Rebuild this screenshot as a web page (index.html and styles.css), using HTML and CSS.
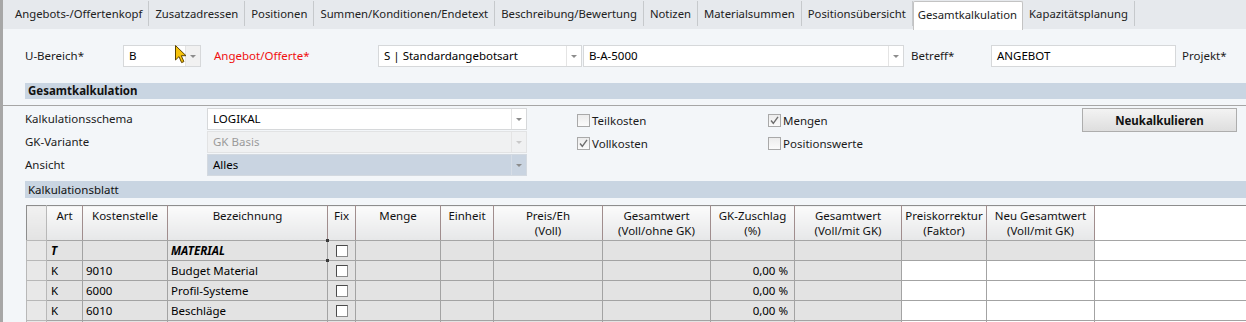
FILE: index.html
```html
<!DOCTYPE html>
<html lang="de">
<head>
    <meta charset="UTF-8">
    <title>Gesamtkalkulation</title>
    <link rel="stylesheet" href="styles.css">
</head>
<body>
<div class="window">
    <div class="tabs">
        <span class="tab">Angebots-/Offertenkopf</span>
        <span class="tab">Zusatzadressen</span>
        <span class="tab">Positionen</span>
        <span class="tab">Summen/Konditionen/Endetext</span>
        <span class="tab">Beschreibung/Bewertung</span>
        <span class="tab">Notizen</span>
        <span class="tab">Materialsummen</span>
        <span class="tab">Positionsübersicht</span>
        <span class="tab active">Gesamtkalkulation</span>
        <span class="tab">Kapazitätsplanung</span>
    </div>

    <div class="head">
        <span class="lbl lbl-ub">U-Bereich*</span>
        <div class="combo combo-ub"><span class="combo-text">B</span><span class="combo-btn grey"></span></div>
        <span class="lbl lbl-ang required">Angebot/Offerte*</span>
        <div class="combo combo-art"><span class="combo-text">S | Standardangebotsart</span><span class="combo-btn"></span></div>
        <div class="combo combo-nr"><span class="combo-text">B-A-5000</span><span class="combo-btn"></span></div>
        <span class="lbl lbl-betreff">Betreff*</span>
        <div class="field field-betreff">ANGEBOT</div>
        <span class="lbl lbl-projekt">Projekt*</span>
    </div>

    <div class="section-bar bold">Gesamtkalkulation</div>
    <div class="rule"></div>

    <div class="calc">
        <span class="lbl">Kalkulationsschema</span>
        <div class="combo"><span class="combo-text">LOGIKAL</span><span class="combo-btn"></span></div>
        <label class="check col-a"><span class="box"></span>Teilkosten</label>
        <label class="check col-b"><span class="box"><svg viewBox="0 0 11 11" width="11" height="11"><path d="M2 5.5 L4.3 8.3 L9 1.8" fill="none" stroke="#6e6e6e" stroke-width="1.4"/></svg></span>Mengen</label>
        <button class="btn">Neukalkulieren</button>

        <span class="lbl">GK-Variante</span>
        <div class="combo disabled"><span class="combo-text">GK Basis</span><span class="combo-btn"></span></div>
        <label class="check col-a"><span class="box"><svg viewBox="0 0 11 11" width="11" height="11"><path d="M2 5.5 L4.3 8.3 L9 1.8" fill="none" stroke="#6e6e6e" stroke-width="1.4"/></svg></span>Vollkosten</label>
        <label class="check col-b"><span class="box"></span>Positionswerte</label>

        <span class="lbl">Ansicht</span>
        <div class="combo selected"><span class="combo-text">Alles</span><span class="combo-btn"></span></div>
    </div>

    <div class="section-bar tall">Kalkulationsblatt</div>

    <table class="sheet">
        <colgroup>
            <col class="w-sel"><col class="w-art"><col class="w-kst"><col class="w-bez"><col class="w-fix">
            <col class="w-menge"><col class="w-einheit"><col class="w-preis"><col class="w-gesamt">
            <col class="w-gk"><col class="w-gesamt2"><col class="w-korr"><col class="w-neu"><col>
        </colgroup>
        <thead>
            <tr>
                <th class="rh"></th>
                <th>Art</th>
                <th>Kostenstelle</th>
                <th>Bezeichnung</th>
                <th>Fix</th>
                <th>Menge</th>
                <th>Einheit</th>
                <th>Preis/Eh<br>(Voll)</th>
                <th>Gesamtwert<br>(Voll/ohne GK)</th>
                <th>GK-Zuschlag<br>(%)</th>
                <th>Gesamtwert<br>(Voll/mit GK)</th>
                <th>Preiskorrektur<br>(Faktor)</th>
                <th>Neu Gesamtwert<br>(Voll/mit GK)</th>
                <th class="blank"></th>
            </tr>
        </thead>
        <tbody>
            <tr class="title">
                <td class="rh"></td>
                <td>T</td>
                <td></td>
                <td class="focus">MATERIAL</td>
                <td class="fix"><span class="cell-box"></span></td>
                <td></td><td></td><td></td><td></td><td></td><td></td>
                <td></td><td></td>
                <td class="edit"></td>
            </tr>
            <tr>
                <td class="rh"></td>
                <td>K</td>
                <td>9010</td>
                <td>Budget Material</td>
                <td class="fix"><span class="cell-box"></span></td>
                <td></td><td></td><td></td><td></td>
                <td class="num">0,00 %</td>
                <td></td>
                <td class="edit"></td><td class="edit"></td><td class="edit"></td>
            </tr>
            <tr>
                <td class="rh"></td>
                <td>K</td>
                <td>6000</td>
                <td>Profil-Systeme</td>
                <td class="fix"><span class="cell-box"></span></td>
                <td></td><td></td><td></td><td></td>
                <td class="num">0,00 %</td>
                <td></td>
                <td class="edit"></td><td class="edit"></td><td class="edit"></td>
            </tr>
            <tr>
                <td class="rh"></td>
                <td>K</td>
                <td>6010</td>
                <td>Beschläge</td>
                <td class="fix"><span class="cell-box"></span></td>
                <td></td><td></td><td></td><td></td>
                <td class="num">0,00 %</td>
                <td></td>
                <td class="edit"></td><td class="edit"></td><td class="edit"></td>
            </tr>
            <tr>
                <td class="rh"></td>
                <td></td><td></td><td></td><td class="fix"></td>
                <td></td><td></td><td></td><td></td><td></td><td></td>
                <td class="edit"></td><td class="edit"></td><td class="edit"></td>
            </tr>
        </tbody>
    </table>

    <!-- mouse pointer from the screenshot -->
    <svg class="cursor" viewBox="0 0 12 19" width="12" height="19">
        <path d="M0.5 0.5 L0.5 15 L4 11.6 L6.6 17.6 L8.9 16.6 L6.3 10.7 L11 10.7 Z" fill="#f6c20a" stroke="#5c4300" stroke-width="1"/>
    </svg>
</div>
</body>
</html>
```

FILE: styles.css
```css
body {
    margin: 0;
    background: #f3f6f9;
    color: #1b1b1b;
    font-family: "Noto Sans", "Open Sans", sans-serif;
    font-size: 11.5px;
}
.window {
    position: relative;
    height: 322px;
    overflow: hidden;
    border-left: 3px solid #a7a7a7;
    background: #f3f6f9;
}

/* tab strip */
.tabs {
    display: flex;
    height: 29px;
    padding-left: 6px;
    background: #e6e9ed;
    font-size: 11.3px;
}
.tab {
    height: 25px;
    margin-top: 1px;
    padding: 0 6px;
    border-right: 1px solid #c6c9cc;
    line-height: 25px;
    color: #222222;
    white-space: nowrap;
}
.tab.active {
    height: 28px;
    margin-top: 1px;
    padding: 0 5px 0 4px;
    border: 1px solid #c3c3c3;
    border-bottom: none;
    border-radius: 2px 2px 0 0;
    background: #ffffff;
    line-height: 25px;
}

/* header fields */
.head {
    display: flex;
    align-items: flex-start;
    height: 54px;
    padding: 16px 0 0 22px;
    box-sizing: border-box;
}
.lbl {
    line-height: 22px;
    white-space: nowrap;
}
.lbl-ub { width: 98px; }
.lbl-ang { width: 164px; margin-left: 13px; }
.lbl-betreff { width: 80px; margin-left: 7px; }
.lbl-projekt { margin-left: 6px; }
.required { color: #f01010; }

.combo {
    display: flex;
    height: 22px;
    box-sizing: border-box;
    border: 1px solid #d6d8da;
    background: #ffffff;
}
.combo-text {
    flex: 1;
    padding-left: 5px;
    line-height: 20px;
    color: #000000;
    white-space: nowrap;
    overflow: hidden;
}
.combo-btn {
    position: relative;
    width: 14px;
    border-left: 1px solid #e4e4e4;
}
.combo-btn.grey {
    background: #f1f1f1;
}
.combo-btn::after {
    content: "";
    position: absolute;
    left: 4px;
    top: 9px;
    border-left: 3px solid transparent;
    border-right: 3px solid transparent;
    border-top: 3px solid #8c8c8c;
}
.combo-ub { width: 78px; }
.combo-art { width: 204px; }
.combo-nr { width: 321px; margin-left: 1px; }
.combo.disabled {
    background: #f0f1f2;
    border-color: #e2e3e4;
}
.combo.disabled .combo-text { color: #9a9a9a; }
.combo.disabled .combo-btn::after { border-top-color: #c9c9c9; }
.combo.selected {
    background: #c9d4e1;
    border-color: #d3d9e0;
}
.combo.selected .combo-btn { border-left-color: #d6dde6; }

.field {
    width: 185px;
    height: 22px;
    box-sizing: border-box;
    padding-left: 5px;
    border: 1px solid #d6d8da;
    background: #ffffff;
    line-height: 20px;
    color: #000000;
}

/* section bars */
.section-bar {
    height: 16px;
    margin-left: 22px;
    padding-left: 3px;
    background: #c9d5e2;
    line-height: 16px;
    color: #111111;
}
.section-bar.bold { font-weight: bold; }
.section-bar.tall { height: 17px; line-height: 17px; }
.rule {
    height: 1px;
    margin-top: 6px;
    background: #a6a6a6;
}

/* calculation options */
.calc {
    display: grid;
    grid-template-columns: 182px 320px 50px 191px 314px 155px;
    grid-template-rows: 22px 22px 22px;
    row-gap: 1px;
    align-items: center;
    height: 75px;
    padding: 2px 0 0 22px;
    box-sizing: border-box;
}
.calc .lbl { grid-column: 1; }
.calc .combo { grid-column: 2; }
.check {
    display: flex;
    align-items: center;
    margin-top: 2px;
    white-space: nowrap;
}
.col-a { grid-column: 4; }
.col-b { grid-column: 5; }
.box {
    display: flex;
    align-items: center;
    justify-content: center;
    width: 13px;
    height: 13px;
    margin-right: 2px;
    box-sizing: border-box;
    border: 1px solid #a9a9a9;
    background: linear-gradient(#ececec, #fbfbfb);
}
.btn {
    grid-column: 6;
    grid-row: 1;
    align-self: start;
    height: 24px;
    border: 1px solid #adadad;
    background: linear-gradient(#f3f3f3, #dedede);
    font-family: inherit;
    font-size: 11.5px;
    font-weight: bold;
    color: #111111;
}

/* grid sheet */
.sheet {
    width: 1249px;
    margin: 7px 0 0 23px;
    border-collapse: collapse;
    table-layout: fixed;
    border-top: 1px solid #8d8d8d;
    border-left: 1px solid #8d8d8d;
    color: #000000;
}
.w-sel { width: 20px; }
.w-art { width: 36px; }
.w-kst { width: 85px; }
.w-bez { width: 160px; }
.w-fix { width: 28px; }
.w-menge { width: 85px; }
.w-einheit { width: 53px; }
.w-preis { width: 109px; }
.w-gesamt { width: 108px; }
.w-gk { width: 84px; }
.w-gesamt2 { width: 107px; }
.w-korr { width: 85px; }
.w-neu { width: 108px; }

.sheet th {
    height: 32px;
    padding: 2px 2px 0;
    vertical-align: top;
    border-right: 1px solid #a08d8d;
    border-bottom: 1px solid #a5a5a5;
    background: linear-gradient(#fbfbfb, #e6e7e8);
    font-weight: normal;
    line-height: 15px;
    text-align: center;
    white-space: nowrap;
    color: #111111;
}
.sheet th.blank {
    border-right: none;
    background: #ffffff;
}
.sheet td {
    height: 19px;
    padding: 0 4px 0 3px;
    border: 1px solid #a3a3a3;
    background: #e3e3e3;
    line-height: 18px;
    white-space: nowrap;
}
.sheet td:first-child + td { padding-left: 4px; }
.sheet .rh {
    background: #e8e8e8;
    border-color: #b8b8b8;
}
.sheet th.rh { background: linear-gradient(#f1f1f1, #e3e3e3); }
.sheet td.edit { background: #ffffff; }
.sheet td.num {
    padding-right: 6px;
    text-align: right;
}
.sheet .title td {
    font-weight: bold;
    font-style: italic;
}
.sheet td.focus { position: relative; }
.sheet td.focus::before,
.sheet td.focus::after {
    content: "";
    position: absolute;
    right: -2px;
    width: 3px;
    height: 3px;
    background: #3a3a3a;
}
.sheet td.focus::before { top: -2px; }
.sheet td.focus::after { bottom: -2px; }
.sheet td.fix { padding: 0 0 0 8px; }
.cell-box {
    display: block;
    width: 12px;
    height: 12px;
    box-sizing: border-box;
    border: 1px solid #4a4a4a;
    border-right-color: #8a8a8a;
    border-bottom-color: #8a8a8a;
    background: #ffffff;
}

.cursor {
    position: absolute;
    left: 172px;
    top: 45px;
}
```
